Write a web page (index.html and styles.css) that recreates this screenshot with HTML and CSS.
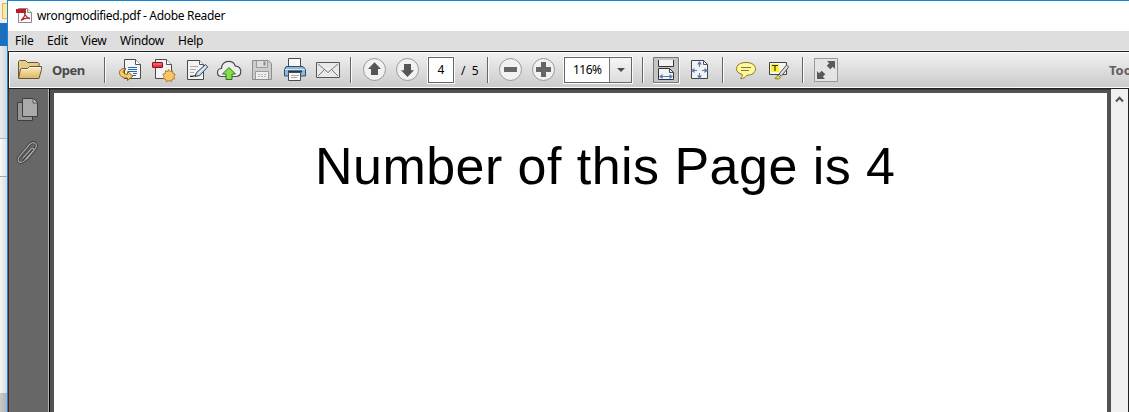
FILE: index.html
```html
<!DOCTYPE html>
<html lang="en">
<head>
<meta charset="utf-8">
<title>wrongmodified.pdf - Adobe Reader</title>
<link rel="stylesheet" href="styles.css">
</head>
<body>
<div class="screen">
  <div class="behind"><div class="b-top"><i class="b-folder"></i></div><div class="b-blue"></div><div class="b-mid"></div><div class="b-row"></div><div class="b-light"></div><div class="b-foot"></div></div>
  <div class="window">
    <header class="titlebar">
      <svg class="app-icon" width="16" height="17" viewBox="0 0 16 17"><path d="M2.500 1.500h9l4 4v10h-13z" fill="#fff" stroke="#888"/><path d="M11.500 1.500v4h4" fill="#eee" stroke="#888"/><path d="M0 2h10v4H0z" fill="#bd1b27"/><path d="M5 13.500c2-2 4.500-5 4-7.500-1-1 0 4.500 5 5.500-3-.8-6 0-9 2z" fill="none" stroke="#b51f2b" stroke-width="1.300"/></svg>
      <span class="title">wrongmodified.pdf - Adobe Reader</span>
    </header>
    <nav class="menu"><span class="m-file">File</span><span class="m-edit">Edit</span><span class="m-view">View</span><span class="m-window">Window</span><span class="m-help">Help</span></nav>
    <div class="toolbar">
      <svg class="tool folder" width="26" height="26" viewBox="17 57 26 26"><defs><linearGradient id="fo" x2="0" y2="1"><stop stop-color="#fff0bd"/><stop offset="1" stop-color="#d8b567"/></linearGradient></defs><path d="M18.500 78V61.500l1-1h6l2 2h10.500l1 1V66" fill="#e6cd8c" stroke="#6b5635"/><path d="M18.500 78.500l2-9.500 1-.5h6l2-2h12v3l-2.500 9z" fill="url(#fo)" stroke="#6b5635"/><path d="M22 69.500h6l2-2h10.500" fill="none" stroke="#fff8d8"/></svg>
      <span class="open">Open</span>
      <i class="sep s1"></i>
      <svg class="tool t1" width="26" height="26" viewBox="117 57 26 26"><path d="M124.500 59.500h11l5 5v14h-16z" fill="#f5f5f5" stroke="#4a4a4a"/><path d="M135.500 59.500v5h5" fill="#fff" stroke="#555"/><path d="M128 67.500h9m-9 2h9m-9 2h9m-4 2h4m-4 2h3" stroke="#2867b7"/><path d="M125.500 68.500c-4.500-.5-6.500 2.500-6 5 .6 3 4 4.800 8 4.600v2.400l5.500-4.500-5.500-4.300v2.600c-3 0-4.300-1-4.300-2.700 0-1.300 1-2 2.300-1.800z" fill="#f6cb6a" stroke="#87550c" stroke-width=".9"/></svg>
      <svg class="tool t2" width="26" height="26" viewBox="150 57 26 26"><path d="M155.500 59.500h11l5 5v14h-16z" fill="#f3f3f3" stroke="#4a4a4a"/><path d="M166.500 59.500v5h5" fill="#fff" stroke="#555"/><rect x="152.500" y="62.500" width="10" height="5" rx=".5" fill="#e2384a" stroke="#8f1020"/><path d="M153 64h9" stroke="#f78690"/><path d="M168.500 69.500l1.500 2 2.500-.8.300 2.600 2.400 1-1.400 2 1 2.400-2.600.5-.8 2.500-2.400-1.200-2.400 1.200-.8-2.500-2.600-.5 1-2.400-1.400-2 2.400-1 .3-2.600 2.500.8z" fill="#fac766" stroke="#a87320" stroke-width=".9"/></svg>
      <svg class="tool t3" width="26" height="26" viewBox="185 57 26 26"><path d="M187.500 60.500h12l4 4v15h-16z" fill="#f3f3f3" stroke="#4a4a4a"/><path d="M199.500 60.500v4h4" fill="#fff" stroke="#555"/><path d="M190 66.500h8m-8 3h6m-6 3h4m-4 3h4" stroke="#aaa"/><path d="M195 76.500l1.500-4 9-8 2.300 2.300-8 8.700z" fill="#b9d3e8" stroke="#344b5e"/><path d="M198.500 73.500l7-6.500" stroke="#fff"/><path d="M190 76.500h3l3-1.500" fill="none" stroke="#333"/></svg>
      <svg class="tool t4" width="26" height="26" viewBox="216 57 26 26"><path d="M221.500 76.500c-3 0-4-2-4-4 0-2 1.500-4 4-4 0-4 3-7.200 7-7.200 3.500 0 6 2 6.800 4.900 3.200-.2 5.500 2 5.500 5.300 0 3-2 5-5 5z" fill="#eee" stroke="#4c4c4c" stroke-width="1.200"/><path d="M229 67.500l6.500 6.500h-3.500v5.500h-6V74h-3.500z" fill="#83e046" stroke="#35701b"/></svg>
      <svg class="tool t5" width="26" height="26" viewBox="249 57 26 26"><path d="M252.500 60.500h16l3 3v16h-19z" fill="#ccc" stroke="#8e8e8e"/><path d="M256.500 61v6.500h11V61" fill="#ddd" stroke="#999"/><path d="M264.500 61.500v4" stroke="#888" stroke-width="2"/><path d="M255.500 79v-7.500h13V79" fill="#eee" stroke="#999"/><path d="M258 74.500h8m-8 2h8" stroke="#b4b4b4" stroke-dasharray="2 1"/></svg>
      <svg class="tool t6" width="26" height="26" viewBox="282 57 26 26"><path d="M288.500 68v-9.500h12V68" fill="#f8f8f8" stroke="#4b4b4b"/><path d="M286 66.500h17l2.500 3v6.500h-21v-6.500z" fill="#8db7df" stroke="#334e68"/><path d="M285 69.500h20" stroke="#cee6f8"/><path d="M288 71.500h14" stroke="#22394d" stroke-width="2"/><path d="M288.500 72.500h12v8h-12z" fill="#f8f8f8" stroke="#4b4b4b"/><path d="M291 75.500h8m-8 2h6" stroke="#aaa"/></svg>
      <svg class="tool t7" width="26" height="26" viewBox="315 57 26 26"><path d="M316.500 62.500h23v15h-23z" fill="#e9e9e9" stroke="#555"/><path d="M318 64l10 8.500 10-8.500M318 76l7-7m13 7l-7-7" fill="none" stroke="#777"/></svg>
      <i class="sep s2"></i>
      <svg class="tool t8" width="26" height="26" viewBox="361 57 26 26"><circle cx="374.500" cy="69.500" r="11" fill="#f1f1f1" stroke="#999"/><path d="M374.500 62.300l6.500 6.700h-3v6h-7v-6h-3z" fill="#555"/></svg>
      <svg class="tool t9" width="26" height="26" viewBox="394 57 26 26"><circle cx="407.500" cy="69.500" r="11" fill="#f1f1f1" stroke="#999"/><path d="M407.500 77l6.500-6.700h-3V64h-7v6.300h-3z" fill="#555"/></svg>
      <span class="page-no">4</span><span class="total">/&nbsp; 5</span>
      <i class="sep s3"></i>
      <svg class="tool t10" width="26" height="26" viewBox="497 57 26 26"><circle cx="510.500" cy="69.500" r="11" fill="#f1f1f1" stroke="#999"/><path d="M504 67h13v5h-13z" fill="#666"/></svg>
      <svg class="tool t11" width="26" height="26" viewBox="530 57 26 26"><circle cx="543.500" cy="69.500" r="11" fill="#f1f1f1" stroke="#999"/><path d="M541 62h5v5h5v5h-5v5h-5v-5h-5v-5h5z" fill="#666"/></svg>
      <div class="zoom"><span>116%</span><b></b></div>
      <i class="sep s4"></i>
      <svg class="tool fit" width="27" height="28" viewBox="653 56 27 28"><path d="M653.500 57.500h25v25h-25z" fill="#c5c5c5" stroke="#777"/><path d="M679.500 57v26.500H653" fill="none" stroke="#fff"/><path d="M658.500 60v6.500h15V60M658.500 79.500v-11h11l4 4v7z" fill="#f3f3f3" stroke="#333"/><path d="M669.500 68.500v4h4" fill="none" stroke="#444"/><path d="M661 76.500h10" stroke="#5579bc"/><path d="M662.500 74l-3.500 2.500 3.500 2.500zm7 0l3.500 2.500-3.500 2.500z" fill="#5579bc"/></svg>
      <svg class="tool t12" width="26" height="26" viewBox="687 57 26 26"><path d="M691.500 60.500h12l4 4v14h-16z" fill="#f3f3f3" stroke="#444"/><path d="M703.500 60.500v4h4" fill="none" stroke="#555"/><path d="M699.500 62v5m0 6v5M692 70.500h5m5 0h5" stroke="#5579bc"/><path d="M697 64.500l2.500-3.500 2.500 3.500zm0 11h5l-2.500 3.500zM694.500 68v5L691 70.500zm10 0v5l3.500-2.500z" fill="#5579bc"/></svg>
      <i class="sep s5"></i>
      <svg class="tool t13" width="26" height="26" viewBox="733 57 26 26"><path d="M746 62.500c6 0 9.500 2.700 9.500 6.300 0 4-3.500 6.400-8.500 6.400-1.600 2.200-3.500 3.500-6.500 3.300 1.500-1.500 2-2.500 1.800-4-3.700-1-5.800-3-5.800-5.700 0-3.600 3.600-6.300 9.500-6.300z" fill="#fff99c" stroke="#8c7623"/><path d="M741 67.500h10m-10 3h8" stroke="#7d783e"/></svg>
      <svg class="tool t14" width="26" height="26" viewBox="766 57 26 26"><path d="M769.500 62.500h17v12h-17z" fill="#f5f5f5" stroke="#444"/><path d="M771 64h8v8h-8z" fill="#fff022"/><path d="M772 65.500h6m-3 0v5.500" stroke="#33331a" stroke-width="1.200"/><path d="M779 74l7.500-9 2.200 2-7.200 9z" fill="#ddd" stroke="#555"/><path d="M775 78.500l3-3.500 2.500 2.500-2 1.500z" fill="#e9df25" stroke="#77711d" stroke-width=".8"/></svg>
      <i class="sep s6"></i>
      <svg class="tool t15" width="26" height="26" viewBox="813 57 26 26"><path d="M814.500 58.500h23v23h-23z" fill="#e4e4e4" stroke="#999"/><path d="M835 61v8l-2.200-2.200-2.500 2.500-3.600-3.600 2.500-2.500L827 61zM817 79v-8l2.200 2.200 2.500-2.500 3.600 3.600-2.500 2.500L825 79z" fill="#5a5a5a"/></svg>
      <span class="tools">Tools</span>
    </div>
    <main class="workspace">
      <aside class="side">
        <svg width="24" height="25" viewBox="16 97 24 25"><path d="M17.500 102.500h15v18h-15z" fill="#969696" stroke="#3e3e3e"/><path d="M22.500 98.500h11l4 4v14h-15z" fill="#aaa" stroke="#3e3e3e"/><path d="M33 99v4h4" fill="#c8c8c8" stroke="#555"/></svg>
        <svg class="clip" width="24" height="26" viewBox="16 140 24 26"><g fill="none" stroke-linecap="round"><path d="M23 158l8-9c2-2 4 0 2 2l-8 9c-4 5-9 1-6-3l10-12c4-5 10-1 6 4l-8 10" stroke="#3b3b3b" stroke-width="2.800"/><path d="M23 158l8-9c2-2 4 0 2 2l-8 9c-4 5-9 1-6-3l10-12c4-5 10-1 6 4l-8 10" stroke="#aaa" stroke-width="1.200"/></g></svg>
      </aside>
      <section class="canvas"><article class="page"><h1>Number of this Page is 4</h1></article></section>
      <div class="scroll"><svg width="9" height="7" viewBox="0 0 9 7"><path d="M1 5.500l3.500-3.700L8 5.500" fill="none" stroke="#505050" stroke-width="2"/></svg></div>
    </main>
  </div>
</div>
</body>
</html>
```
FILE: styles.css
```css
* { box-sizing: border-box; }
body { margin: 0; overflow: hidden; font: 12px "Noto Sans", "Open Sans", sans-serif; color: #000; }
.screen { display: flex; width: 1129px; height: 412px; }
.behind { width: 7px; flex: none; display: flex; flex-direction: column; }
.b-top { height: 23px; background: #eee; padding: 3px 0 0 2px; }
.b-folder { display: block; width: 5px; height: 16px; background: #ffe896; border: 1px solid #e2bd4d; border-right: 0; }
.b-blue { height: 23px; background: #1a70bd; }
.b-mid { height: 93px; background: linear-gradient(90deg, #e9ebed, #d4d6d8); border-bottom: 1px solid #bbb; }
.b-row { height: 38px; background: linear-gradient(90deg, #fafafa, #dedede); border-bottom: 1px solid #aaa; }
.b-light { flex: 1; background: linear-gradient(90deg, #f5f5f5, #dadada); }
.b-foot { height: 19px; background: linear-gradient(90deg, #c9c9c9, #b2b2b2); }
.window { width: 1122px; border-left: 1px solid #2083d5; border-top: 1px solid #1883d7; display: flex; flex-direction: column; }
.titlebar { height: 30px; display: flex; align-items: center; background: #fff; padding: 0 0 1px 8px; }
.title { margin-left: 5px; white-space: nowrap; letter-spacing: -.32px; font-size: 12px; }
.menu { height: 20px; background: #dedede; border-bottom: 1px solid #efefef; display: flex; align-items: center; padding-left: 7px; line-height: 18px; font-size: 12px; }
.m-file { width: 32px; letter-spacing: -.15px; }
.m-edit { width: 34px; letter-spacing: -.15px; }
.m-view { width: 39px; letter-spacing: -.15px; }
.m-window { width: 58px; letter-spacing: -.25px; }
.m-help { letter-spacing: -.25px; }
.toolbar { height: 38px; border-top: 1px solid #222; border-bottom: 1px solid #222; border-left: 1px solid #222; background: linear-gradient(#f1f1f1, #cacaca); box-shadow: inset 1px 1px #fff, inset 0 -1px #fafafa; display: flex; align-items: center; overflow: hidden; }
.toolbar > * { flex: none; }
.tool { display: block; }
.folder { margin-left: 8px; }
.open { width: 61px; padding-left: 9px; color: #4a4a4a; font-size: 13px; font-weight: bold; letter-spacing: -.5px; }
.sep { width: 2px; height: 26px; background: #666; border-right: 1px solid #fafafa; }
.t1 { margin-left: 11px; }
.t2 { margin-left: 7px; }
.t3 { margin-left: 9px; }
.t4 { margin-left: 5px; }
.t5, .t6, .t7 { margin-left: 7px; }
.s2 { margin-left: 9px; }
.t8 { margin-left: 9px; }
.t9 { margin-left: 7px; }
.page-no { margin-left: 8px; width: 26px; height: 26px; border: 1px solid #666; outline: 1px solid #fafafa; background: #fff; text-align: center; line-height: 24px; font-size: 12px; }
.total { width: 33px; padding-left: 7px; white-space: nowrap; }
.t10 { margin-left: 8px; }
.t11 { margin-left: 7px; }
.zoom { margin-left: 8px; width: 68px; height: 26px; border: 1px solid #666; outline: 1px solid #fafafa; background: #fff; display: flex; line-height: 24px; }
.zoom span { width: 45px; padding-left: 8px; letter-spacing: -.5px; border-right: 1px solid #777; }
.zoom b { flex: 1; background: linear-gradient(#f5f5f5, #ddd); display: flex; align-items: center; justify-content: center; }
.zoom b::after { content: ""; border: 4px solid transparent; border-top-color: #4c4c4c; border-bottom: 0; }
.s4 { margin-left: 10px; }
.fit { margin-left: 9px; }
.t12 { margin-left: 7px; }
.s5 { margin-left: 9px; }
.t13 { margin-left: 9px; }
.t14 { margin-left: 7px; }
.s6 { margin-left: 10px; }
.t15 { margin-left: 9px; }
.tools { margin-left: 270px; color: #606060; font-size: 13px; font-weight: bold; }
.workspace { flex: 1; display: flex; background: #525252; border-left: 1px solid #303030; border-right: 1px solid #222; }
.side { width: 41px; background: #676767; border-right: 1px solid #000; box-shadow: inset -1px 0 #b5b5b5; padding: 8px 0 0 7px; }
.side svg { display: block; }
.clip { margin-top: 18px; }
.canvas { width: 1061px; padding: 4px 4px 0; background: #525252; box-shadow: inset 0 1px #3c3c3c; }
.page { height: 100%; background: #fff; padding: 43px 0 0 261px; }
h1 { margin: 0; font: 52px/60px "Liberation Sans", Arial, sans-serif; letter-spacing: .46px; white-space: nowrap; }
.scroll { flex: 1; background: #f0f0f0; display: flex; justify-content: center; padding-top: 7px; }
```
